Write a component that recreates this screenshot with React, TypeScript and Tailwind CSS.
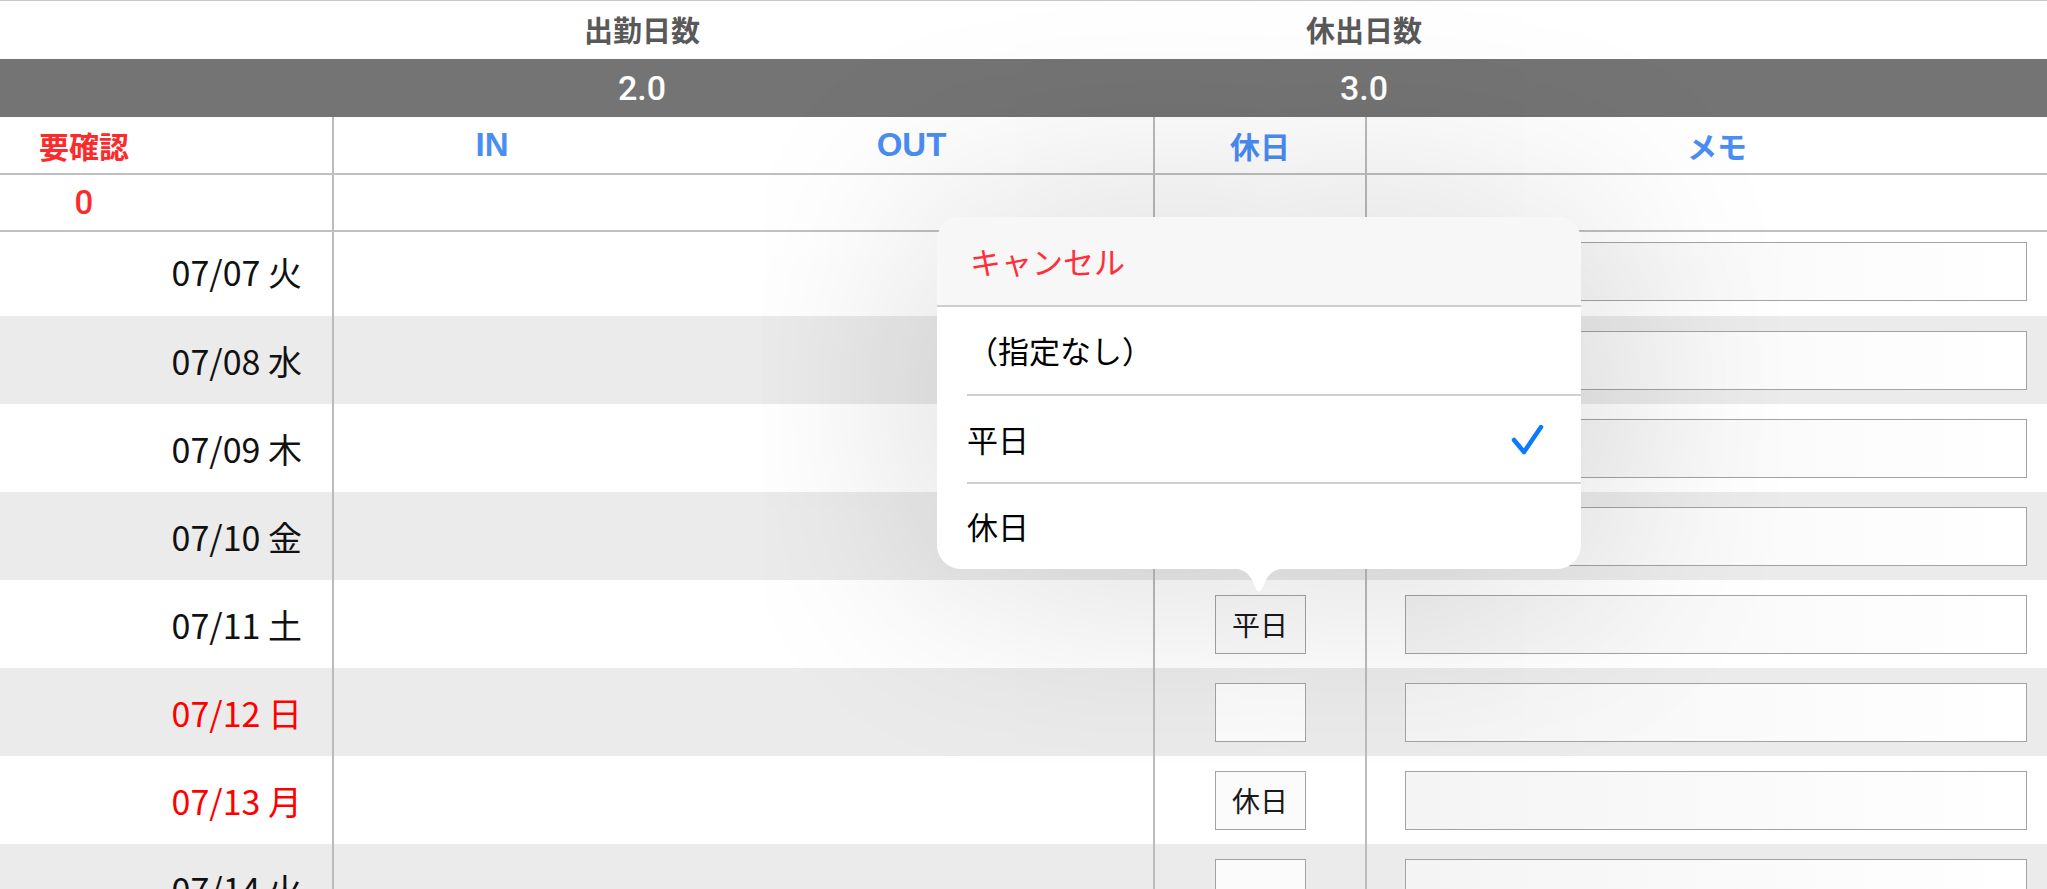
import React from 'react'

const JP = "[font-family:'Noto_Sans_CJK_JP',sans-serif]"
const LATIN = "[font-family:'Liberation_Sans','Noto_Sans_CJK_JP',sans-serif]"
const NUM = "[font-family:Roboto,'Liberation_Sans',sans-serif]"

type DayRow = {
  date: string
  red?: boolean
  shade?: boolean
  kind?: string
}

const rows: DayRow[] = [
  { date: '07/07 火' },
  { date: '07/08 水', shade: true },
  { date: '07/09 木' },
  { date: '07/10 金', shade: true },
  { date: '07/11 土', kind: '平日' },
  { date: '07/12 日', red: true, shade: true },
  { date: '07/13 月', red: true, kind: '休日' },
  { date: '07/14 火', shade: true },
]

function SummaryHeader() {
  return (
    <>
      <div className="grid h-[59px] grid-cols-[462px_360px_362px_360px_1fr] items-center border-t border-[#c8c8c8]">
        <div />
        <div className={`text-center text-[29px] font-bold text-[#595959] ${JP}`}>出勤日数</div>
        <div />
        <div className={`text-center text-[29px] font-bold text-[#595959] ${JP}`}>休出日数</div>
        <div />
      </div>
      <div className="grid h-[58px] grid-cols-[462px_360px_362px_360px_1fr] items-center bg-[#747474]">
        <div />
        <div className={`text-center text-[34px] font-medium text-white ${NUM}`}>2.0</div>
        <div />
        <div className={`text-center text-[34px] font-medium text-white ${NUM}`}>3.0</div>
        <div />
      </div>
    </>
  )
}

function ColumnHeader() {
  return (
    <>
      <div className="grid h-[58px] grid-cols-[332px_821px_212px_1fr] border-b-2 border-[#c0c0c0]">
        <div className="flex items-center">
          <div className={`w-[168px] text-center text-[30px] font-bold text-[#fc2b2b] ${JP}`}>要確認</div>
        </div>
        <div className={`flex items-center border-l-2 border-[#bcbcbc] text-[33px] font-bold text-[#4a8df3] ${LATIN}`}>
          <div className="w-[316px] text-center">IN</div>
          <div className="flex-1 pl-[20px] text-center">OUT</div>
        </div>
        <div className={`flex items-center justify-center border-l-2 border-[#bcbcbc] text-[30px] font-bold text-[#4a8df3] ${JP}`}>
          休日
        </div>
        <div className={`flex items-center justify-center border-l-2 border-[#bcbcbc] pl-[40px] pr-[20px] text-[30px] font-bold text-[#4a8df3] ${JP}`}>
          メモ
        </div>
      </div>
      <div className="grid h-[57px] grid-cols-[332px_821px_212px_1fr] border-b-2 border-[#c0c0c0]">
        <div className="flex items-center">
          <div className={`w-[168px] text-center text-[33px] font-medium text-[#fc2b2b] ${NUM}`}>0</div>
        </div>
        <div className="border-l-2 border-[#bcbcbc]" />
        <div className="border-l-2 border-[#bcbcbc]" />
        <div className="border-l-2 border-[#bcbcbc]" />
      </div>
    </>
  )
}

function DataRow({ row, first }: { row: DayRow; first: boolean }) {
  return (
    <div
      className={`grid grid-cols-[332px_821px_212px_1fr] ${first ? 'h-[84px]' : 'h-[88px]'} ${
        row.shade ? 'bg-[#ebebeb]' : 'bg-white'
      }`}
    >
      <div
        className={`flex items-center justify-end pr-[30px] text-[34px] ${JP} ${
          row.red ? 'text-[#ff0000]' : 'text-[#111111]'
        } ${first ? 'pb-[5px]' : ''}`}
      >
        {row.date}
      </div>
      <div className="border-l-2 border-[#bcbcbc]" />
      <div className={`flex items-center justify-center border-l-2 border-[#bcbcbc] ${first ? 'pb-[5px]' : ''}`}>
        <div
          className={`flex h-[59px] w-[91px] items-center justify-center border-[1.5px] border-[#a3a3a3] bg-[#fbfbfb] text-[28px] text-[#1a1a1a] ${JP}`}
        >
          {row.kind ?? ''}
        </div>
      </div>
      <div className={`flex items-center border-l-2 border-[#bcbcbc] pl-[38px] pr-[20px] ${first ? 'pb-[5px]' : ''}`}>
        <div className="h-[59px] w-full border-[1.5px] border-[#a3a3a3] bg-gradient-to-r from-[#f4f4f4] to-white" />
      </div>
    </div>
  )
}

function DayTypePopover() {
  const options = ['（指定なし）', '平日', '休日']
  const selected = '平日'

  return (
    <div className="absolute left-[937px] top-[217px] z-10 w-[644px] rounded-[24px] bg-white shadow-[0_0_220px_rgba(0,0,0,0.2)]">
      <div className="overflow-hidden rounded-[24px]">
        <div className="flex h-[90px] items-center border-b-2 border-[#cdcdcd] bg-[#f7f7f7] pl-[33px]">
          <span className={`text-[31px] text-[#ff2e3a] ${JP}`}>キャンセル</span>
        </div>
        {options.map((opt, i) => (
          <div
            key={opt}
            className={`ml-[30px] flex items-center justify-between pr-[37px] ${
              i === 1 ? 'h-[88px]' : 'h-[87px]'
            } ${i > 0 ? 'border-t-2 border-[#d0d0d0]' : ''}`}
          >
            <span className={`text-[31px] text-black ${JP}`}>{opt}</span>
            {opt === selected && (
              <svg width="34" height="32" viewBox="0 0 34 32" fill="none">
                <polyline
                  points="4,17 14,29 31,4"
                  stroke="#0a7aff"
                  strokeWidth="4.5"
                  strokeLinecap="round"
                  strokeLinejoin="round"
                />
              </svg>
            )}
          </div>
        ))}
      </div>
      <svg
        className="absolute left-1/2 top-full -mt-px -translate-x-1/2"
        width="64"
        height="26"
        viewBox="0 0 64 26"
      >
        <path d="M0 0 C14 0 20 3 25 12 L29 21 Q32 26 35 21 L39 12 C44 3 50 0 64 0 Z" fill="#ffffff" />
      </svg>
    </div>
  )
}

export default function App() {
  return (
    <div className="relative h-[889px] w-full overflow-hidden bg-white">
      <SummaryHeader />
      <ColumnHeader />
      {rows.map((row, i) => (
        <DataRow key={row.date + i} row={row} first={i === 0} />
      ))}
      <DayTypePopover />
    </div>
  )
}
